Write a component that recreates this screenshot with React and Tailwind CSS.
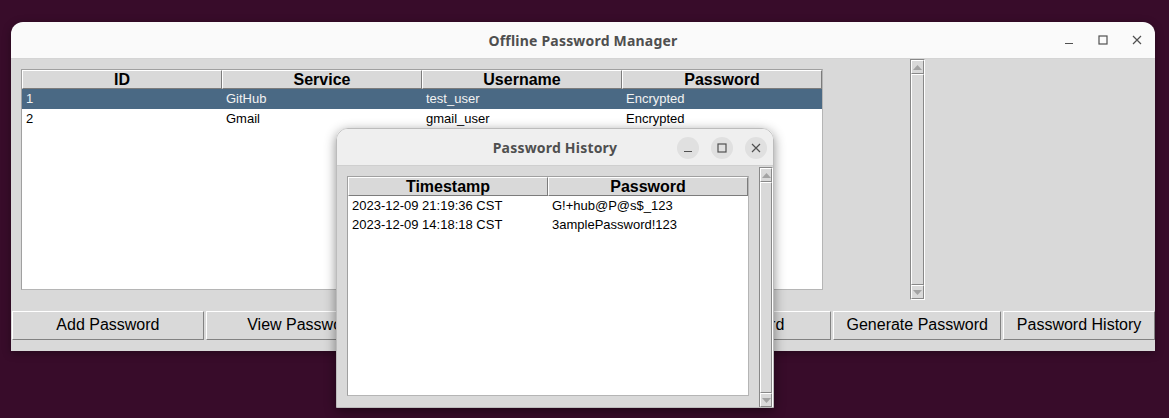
import React from "react";

const SANS = { fontFamily: '"Liberation Sans", Arial, sans-serif' };
const TITLE = { fontFamily: '"Noto Sans", "DejaVu Sans", sans-serif' };

function MinIcon({ size = 10 }) {
  return (
    <svg width={size} height={size} viewBox="0 0 10 10">
      <line x1="1" y1="8.5" x2="9" y2="8.5" stroke="#505050" strokeWidth="1.2" />
    </svg>
  );
}
function MaxIcon({ size = 10 }) {
  return (
    <svg width={size} height={size} viewBox="0 0 10 10">
      <rect x="1" y="1" width="8" height="8" fill="none" stroke="#505050" strokeWidth="1.2" />
    </svg>
  );
}
function CloseIcon({ size = 10 }) {
  return (
    <svg width={size} height={size} viewBox="0 0 10 10">
      <path d="M1 1 L9 9 M9 1 L1 9" stroke="#505050" strokeWidth="1.2" />
    </svg>
  );
}

function Arrow({ up }) {
  return (
    <div className="h-[14px] w-full shrink-0 bg-[#d9d9d9] border-t border-l border-t-white border-l-white border-b border-r border-b-[#888] border-r-[#888] flex items-center justify-center">
      <svg width="9" height="5" viewBox="0 0 9 5">
        {up ? <path d="M0 5 L4.5 0 L9 5 Z" fill="#a3a3a3" /> : <path d="M0 0 L4.5 5 L9 0 Z" fill="#a3a3a3" />}
      </svg>
    </div>
  );
}

function Scrollbar({ className }) {
  return (
    <div className={"flex flex-col bg-[#d9d9d9] border-t border-l border-t-[#888] border-l-[#888] border-b border-r border-b-white border-r-white " + className}>
      <Arrow up />
      <div className="flex-1 border-t border-l border-t-white border-l-white border-b border-r border-b-[#888] border-r-[#888]" />
      <Arrow />
    </div>
  );
}

function HeaderCell({ children, w }) {
  return (
    <div
      className="h-[19px] bg-[#d9d9d9] border-t border-l border-t-white border-l-white border-b border-r border-b-[#7c7c7c] border-r-[#7c7c7c] flex items-center justify-center text-[16px] font-bold text-black leading-none"
      style={{ width: w }}
    >
      {children}
    </div>
  );
}

function Row({ cells, selected, w }) {
  return (
    <div className={"flex h-[19px] pb-[1px] items-center text-[13px] leading-none " + (selected ? "bg-[#4a6984] text-[#f2f2f2] h-[20px]" : "text-black")}>
      {cells.map((c, i) => (
        <div key={i} className="pl-[4px]" style={{ width: w }}>
          {c}
        </div>
      ))}
    </div>
  );
}

function Btn({ children, w }) {
  return (
    <div
      className="h-[29px] pb-[2px] bg-[#d9d9d9] border-t border-l border-t-white border-l-white border-b border-r border-b-[#828282] border-r-[#828282] flex items-center justify-center text-[16px] text-black whitespace-nowrap overflow-hidden"
      style={{ width: w }}
    >
      {children}
    </div>
  );
}

export default function App() {
  return (
    <div className="relative w-[1169px] h-[418px] bg-[#380c2a] overflow-hidden" style={SANS}>
      {/* Main window */}
      <div className="absolute left-[11px] top-[22px] w-[1144px] h-[329px] rounded-t-[12px] overflow-hidden flex flex-col shadow-[0_2px_8px_rgba(0,0,0,0.35)]">
        <div className="h-[37px] shrink-0 bg-[#fafafa] border-b border-b-[#d4d4d4] flex items-center relative">
          <div className="flex-1 text-center text-[14px] font-bold text-[#4f4f4f] tracking-[0.2px]" style={TITLE}>
            Offline Password Manager
          </div>
          <div className="absolute right-[13px] top-[13px] flex gap-[24px]">
            <MinIcon />
            <MaxIcon />
            <CloseIcon />
          </div>
        </div>
        <div className="flex-1 bg-[#d9d9d9] flex flex-col pl-[1px]">
          <div className="flex items-start h-[241px]">
            <div className="ml-[9px] mt-[10px] w-[802px] h-[221px] bg-white border-t border-l border-t-[#a0a0a0] border-l-[#a0a0a0] border-r border-b border-r-[#b5b5b5] border-b-[#b5b5b5]">
              <div className="flex">
                <HeaderCell w={200}>ID</HeaderCell>
                <HeaderCell w={200}>Service</HeaderCell>
                <HeaderCell w={200}>Username</HeaderCell>
                <HeaderCell w={200}>Password</HeaderCell>
              </div>
              <Row w={200} selected cells={["1", "GitHub", "test_user", "Encrypted"]} />
              <Row w={200} cells={["2", "Gmail", "gmail_user", "Encrypted"]} />
            </div>
            <Scrollbar className="ml-[87px] w-[15px] h-[241px]" />
          </div>
          <div className="mt-[11px] flex gap-[2px]">
            <Btn w={192}>Add Password</Btn>
            <Btn w={192}>View Password</Btn>
            <Btn w={215}>Update Password</Btn>
            <Btn w={215}>Delete Password</Btn>
            <Btn w={168}>Generate Password</Btn>
            <Btn w={152}>Password History</Btn>
          </div>
        </div>
      </div>

      {/* Dialog */}
      <div className="absolute left-[336px] top-[128px] w-[438px] h-[280px] rounded-t-[12px] overflow-hidden flex flex-col border border-[#bcbcbc] shadow-[0_3px_12px_rgba(0,0,0,0.45)]">
        <div className="h-[37px] shrink-0 bg-[#efefef] border-b border-b-[#cfcfcf] flex items-center relative">
          <div className="flex-1 text-center text-[14px] font-bold text-[#4f4f4f] tracking-[0.2px]" style={TITLE}>
            Password History
          </div>
          <div className="absolute right-[6px] top-[8px] flex gap-[12px]">
            <div className="w-[22px] h-[22px] rounded-full bg-[#e0e0e0] flex items-center justify-center">
              <MinIcon size={10} />
            </div>
            <div className="w-[22px] h-[22px] rounded-full bg-[#e0e0e0] flex items-center justify-center">
              <MaxIcon size={10} />
            </div>
            <div className="w-[22px] h-[22px] rounded-full bg-[#e0e0e0] flex items-center justify-center">
              <CloseIcon size={10} />
            </div>
          </div>
        </div>
        <div className="flex-1 bg-[#d9d9d9] flex items-start">
          <div className="ml-[10px] mt-[10px] w-[402px] h-[220px] bg-white border-t border-l border-t-[#a0a0a0] border-l-[#a0a0a0] border-r border-b border-r-[#b5b5b5] border-b-[#b5b5b5]">
            <div className="flex">
              <HeaderCell w={200}>Timestamp</HeaderCell>
              <HeaderCell w={200}>Password</HeaderCell>
            </div>
            <Row w={200} cells={["2023-12-09 21:19:36 CST", "G!+hub@P@s$_123"]} />
            <Row w={200} cells={["2023-12-09 14:18:18 CST", "3amplePassword!123"]} />
          </div>
          <Scrollbar className="ml-[10px] mt-[1px] w-[15px] h-[241px]" />
        </div>
      </div>
    </div>
  );
}
